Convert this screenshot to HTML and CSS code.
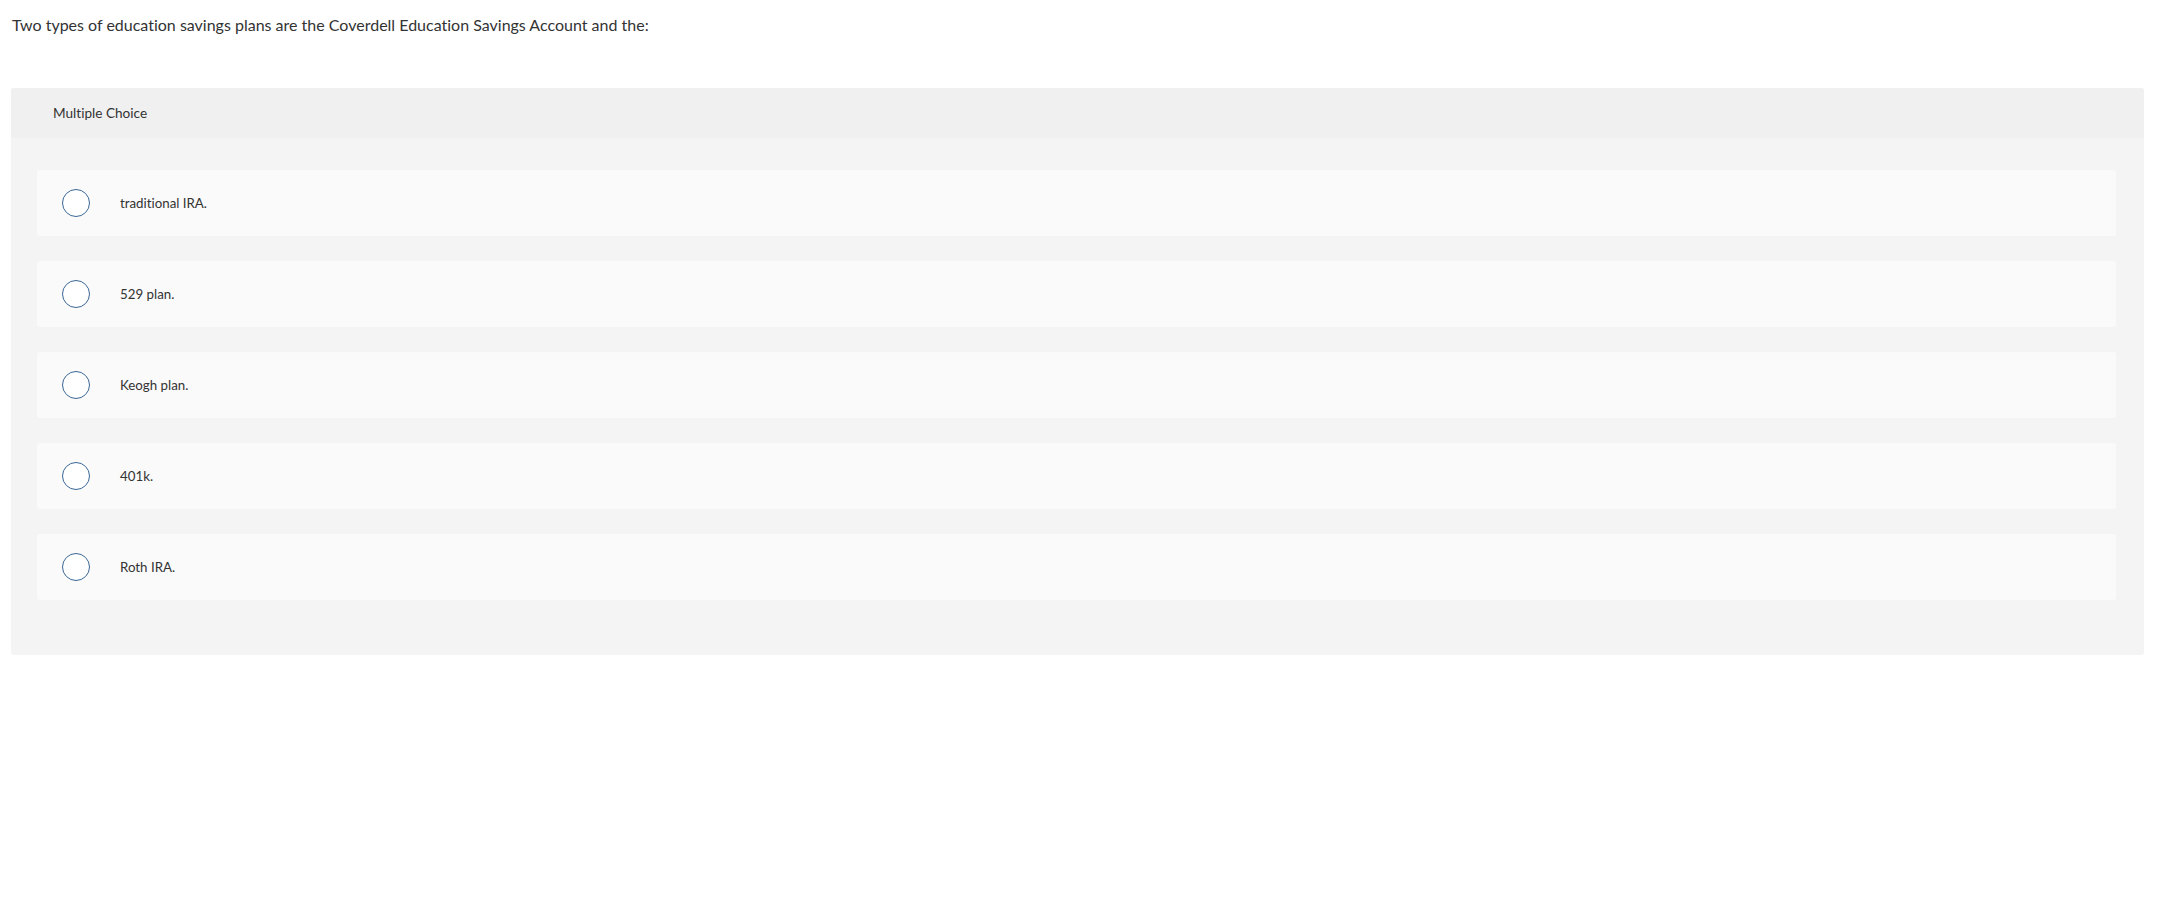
FILE: index.html
```html
<!DOCTYPE html>
<html lang="en">
<head>
<meta charset="utf-8">
<title>Multiple Choice</title>
<link rel="stylesheet" href="styles.css">
</head>
<body>
<main class="page">
  <p class="question">Two types of education savings plans are the Coverdell Education Savings Account and the:</p>
  <section class="panel">
    <header class="panel-head">Multiple Choice</header>
    <div class="options">
      <label class="option"><span class="radio"></span><span class="option-text">traditional IRA.</span></label>
      <label class="option"><span class="radio"></span><span class="option-text">529 plan.</span></label>
      <label class="option"><span class="radio"></span><span class="option-text">Keogh plan.</span></label>
      <label class="option"><span class="radio"></span><span class="option-text">401k.</span></label>
      <label class="option"><span class="radio"></span><span class="option-text">Roth IRA.</span></label>
    </div>
  </section>
</main>
</body>
</html>
```
FILE: styles.css
```css
html, body {
  margin: 0;
  padding: 0;
  background: #ffffff;
}

body {
  font-family: "Lato", "Liberation Sans", sans-serif;
  font-variant-ligatures: none;
  color: #333333;
}

.page {
  padding: 0 29px 0 11px;
}

.question {
  margin: 0;
  padding: 13px 0 0 1px;
  font-size: 16px;
  line-height: 24px;
  height: 88px;
  box-sizing: border-box;
  color: #333333;
}

.panel {
  border-radius: 3px;
  overflow: hidden;
  background: #f4f4f4;
}

.panel-head {
  height: 50px;
  display: flex;
  align-items: center;
  padding-left: 42px;
  background: #f0f0f0;
  font-size: 13.6px;
  color: #333333;
}

.options {
  display: flex;
  flex-direction: column;
  gap: 25px;
  padding: 32px 28px 55px 26px;
}

.option {
  height: 66px;
  display: flex;
  align-items: center;
  background: #fafafa;
  border-radius: 3px;
  padding-left: 25px;
  font-size: 13.3px;
  color: #333333;
}

.radio {
  width: 28px;
  height: 28px;
  box-sizing: border-box;
  border: 1.5px solid #3a6796;
  border-radius: 50%;
  background: #ffffff;
  flex: none;
}

.option-text {
  margin-left: 30px;
}
```
